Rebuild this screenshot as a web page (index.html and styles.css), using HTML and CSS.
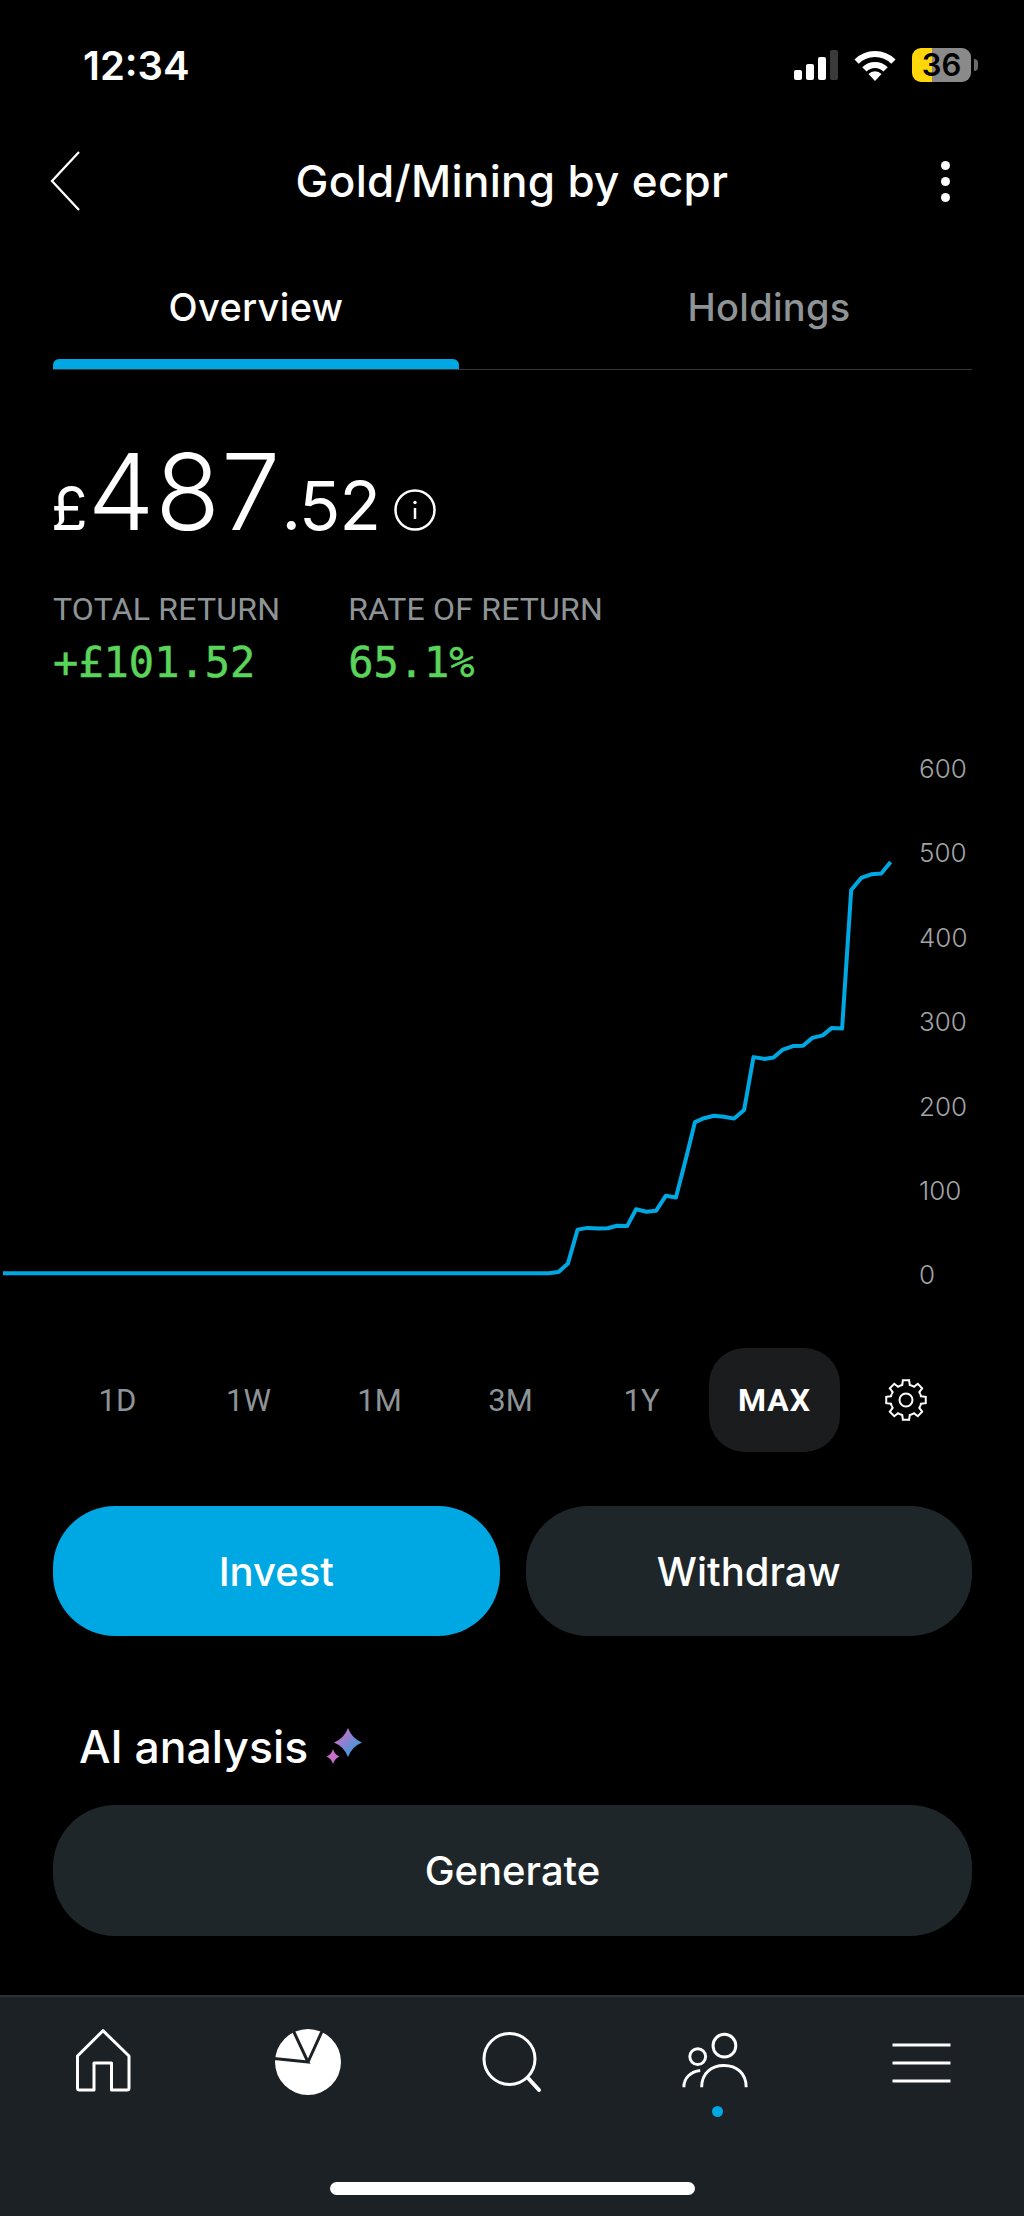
FILE: index.html
```html
<!DOCTYPE html>
<html>
<head>
    <meta charset="utf-8">
    <meta name="viewport" content="width=device-width, initial-scale=1">
    <title>Gold/Mining by ecpr</title>
    <link rel="stylesheet" href="styles.css">
</head>
<body>
    <div class="status">
        <div class="time">12:34</div>
        <div class="status-icons">
            <div class="signal">
                <span class="bar bar-1"></span>
                <span class="bar bar-2"></span>
                <span class="bar bar-3"></span>
                <span class="bar bar-4"></span>
            </div>
            <svg class="wifi" width="44" height="34" viewBox="0 0 44 34">
                <path d="M3.6 13.6a26 26 0 0 1 36.8 0" fill="none" stroke="#fff" stroke-width="6"/>
                <path d="M11.4 21.4a15 15 0 0 1 21.2 0" fill="none" stroke="#fff" stroke-width="6"/>
                <path d="M22 33l-6.500-7a9 9 0 0 1 13 0z" fill="#fff"/>
            </svg>
            <div class="battery">36</div>
            <div class="battery-cap"></div>
        </div>
    </div>

    <div class="topbar">
        <svg class="back" width="40" height="64" viewBox="0 0 40 64">
            <path d="M33 3L6 32l27 29" fill="none" stroke="#fff" stroke-width="2.300"/>
        </svg>
        <div class="title">Gold/Mining by ecpr</div>
        <div class="more">
            <span class="more-dot"></span>
            <span class="more-dot"></span>
            <span class="more-dot"></span>
        </div>
    </div>

    <div class="tabs">
        <div class="tab tab-active">Overview</div>
        <div class="tab">Holdings</div>
    </div>

    <div class="summary">
        <div class="amount">
            <span class="currency">£</span><span class="whole">487</span><span class="cents">.52</span>
            <svg class="info" width="42" height="42" viewBox="0 0 42 42">
                <circle cx="21" cy="21" r="19.500" fill="none" stroke="#fff" stroke-width="2.500"/>
                <circle cx="21" cy="13.500" r="1.700" fill="#fff"/>
                <path d="M21 19v11" stroke="#fff" stroke-width="2.500"/>
            </svg>
        </div>
        <div class="stats">
            <div class="stat">
                <div class="stat-label">TOTAL RETURN</div>
                <div class="stat-value">+£101.52</div>
            </div>
            <div class="stat">
                <div class="stat-label">RATE OF RETURN</div>
                <div class="stat-value">65.1%</div>
            </div>
        </div>
    </div>

    <div class="chart">
        <svg class="chart-line" width="910" height="608" viewBox="0 740 910 608">
            <polyline fill="none" stroke="#00a8e3" stroke-width="4" stroke-linejoin="round" points="3,1273.200 548.500,1273.200 558.500,1272.100 567.900,1263.600 577.600,1229.600 587.600,1227.900 598.700,1228.600 607.700,1228.200 617.100,1225.700 627.100,1226.100 636.100,1209.300 646.500,1211.800 656.200,1210.700 665.900,1195.700 675.900,1197.500 685.600,1160 695,1122.100 704,1118.200 714,1115.700 724,1116.800 734.100,1118.600 744.100,1110 753.500,1057.100 764.200,1058.900 773.600,1057.500 782.900,1049.600 793,1046.100 803,1045.700 812.400,1037.900 822.700,1035.400 831.800,1027.900 842.100,1028.600 851.200,890 861.200,877.900 871.200,874.300 881.300,873.600 890.600,862.100"/>
        </svg>
        <div class="axis">
            <div>600</div>
            <div>500</div>
            <div>400</div>
            <div>300</div>
            <div>200</div>
            <div>100</div>
            <div>0</div>
        </div>
    </div>

    <div class="ranges">
        <div class="range">1D</div>
        <div class="range">1W</div>
        <div class="range">1M</div>
        <div class="range">3M</div>
        <div class="range">1Y</div>
        <div class="range range-active">MAX</div>
        <div class="range">
            <svg width="44" height="44" viewBox="-22 -22 44 44" fill="none" stroke="#fff" stroke-width="2">
                <defs>
                    <path id="tooth" d="M-5.930-14.320L-3.750-15.040-3.130-19.750H3.130L3.750-15.040 5.930-14.320"/>
                </defs>
                <use href="#tooth"/>
                <use href="#tooth" transform="rotate(45)"/>
                <use href="#tooth" transform="rotate(90)"/>
                <use href="#tooth" transform="rotate(135)"/>
                <use href="#tooth" transform="rotate(180)"/>
                <use href="#tooth" transform="rotate(225)"/>
                <use href="#tooth" transform="rotate(270)"/>
                <use href="#tooth" transform="rotate(315)"/>
                <circle r="6.500"/>
            </svg>
        </div>
    </div>

    <div class="actions">
        <div class="btn btn-primary">Invest</div>
        <div class="btn">Withdraw</div>
    </div>

    <div class="analysis">
        <div class="analysis-title">
            AI analysis
            <svg class="sparkle" width="40" height="44" viewBox="0 0 40 44">
                <defs>
                    <linearGradient id="spark" x1="0" y1="0" x2="1" y2="1">
                        <stop offset="0.150" stop-color="#d06cc4"/>
                        <stop offset="0.850" stop-color="#2f9fe0"/>
                    </linearGradient>
                </defs>
                <path d="M25 3q4 10.500 14 14.500q-10 4-14 14.500q-4-10.500-14-14.500q10-4 14-14.500z" fill="url(#spark)"/>
                <path d="M10 24q1.500 5.500 6.500 7.500q-5 2-6.500 7.500q-1.500-5.500-6.500-7.500q5-2 6.500-7.500z" fill="#c870c8"/>
            </svg>
        </div>
        <div class="btn btn-wide">Generate</div>
    </div>

    <div class="bottom">
        <div class="bottom-items">
            <div class="bottom-item">
                <svg width="80" height="80" viewBox="0 0 80 80" fill="none" stroke="#fff" stroke-width="3" stroke-linejoin="round">
                    <path d="M40 10.700L14.500 36V68q0 2 2 2H31V43h17.500V70H64q2 0 2-2V36z"/>
                </svg>
            </div>
            <div class="bottom-item">
                <svg width="80" height="80" viewBox="0 0 80 80">
                    <circle cx="40" cy="42" r="33" fill="#fff"/>
                    <path d="M6 38.500L40 42 25 10M40 42L55 9" fill="none" stroke="#1c2125" stroke-width="3"/>
                </svg>
            </div>
            <div class="bottom-item">
                <svg width="80" height="80" viewBox="0 0 80 80" fill="none" stroke="#fff" stroke-width="3">
                    <circle cx="37.500" cy="39" r="25.500"/>
                    <path d="M56 58l11 12" stroke-width="4" stroke-linecap="round"/>
                </svg>
            </div>
            <div class="bottom-item">
                <svg width="80" height="80" viewBox="0 0 80 80" fill="none" stroke="#fff" stroke-width="3">
                    <circle cx="47.500" cy="26" r="11.500"/>
                    <circle cx="20.500" cy="37" r="8"/>
                    <path d="M24.500 68C24.500 53 35 46 47 46c13 0 22.500 8 22.500 22"/>
                    <path d="M6.500 68C6.500 58 14 52 23 51"/>
                </svg>
                <span class="bottom-dot"></span>
            </div>
            <div class="bottom-item">
                <svg width="80" height="80" viewBox="0 0 80 80" stroke="#fff" stroke-width="3">
                    <path d="M10.500 25h58M10.500 43h58M10.500 61h58"/>
                </svg>
            </div>
        </div>
        <div class="home-bar"></div>
    </div>
</body>
</html>
```

FILE: styles.css
```css
* {
    box-sizing: border-box;
}

body {
    margin: 0;
    width: 1024px;
    height: 2216px;
    overflow: hidden;
    background-color: #000;
    color: #fff;
    font-family: Inter, "Noto Sans", sans-serif;
    display: flex;
    flex-direction: column;
}

/* status bar */
.status {
    height: 130px;
    flex-shrink: 0;
    display: flex;
    justify-content: space-between;
    align-items: center;
    padding: 0 46px 0 83px;
}

.time {
    font-size: 40px;
    font-weight: 600;
}

.status-icons {
    display: flex;
    align-items: center;
}

.signal {
    display: flex;
    align-items: flex-end;
    gap: 4px;
    height: 30px;
    margin-right: 15px;
}

.bar {
    width: 8px;
    background-color: #fff;
    border-radius: 2px;
}

.bar-1 { height: 10px; }
.bar-2 { height: 16px; }
.bar-3 { height: 23px; }
.bar-4 { height: 30px; background-color: #3a3a3a; }

.wifi {
    margin-right: 15px;
}

.battery {
    width: 59px;
    height: 34px;
    border-radius: 9px;
    background: linear-gradient(to right, #ffd60a 0, #ffd60a 20px, #8a8a8a 20px);
    color: #000;
    font-size: 31px;
    font-weight: 600;
    line-height: 34px;
    text-align: center;
}

.battery-cap {
    width: 4px;
    height: 12px;
    margin-left: 3px;
    background-color: #6a6a6a;
    border-radius: 0 4px 4px 0;
}

/* title row */
.topbar {
    height: 102px;
    flex-shrink: 0;
    display: grid;
    grid-template-columns: 100px 1fr 100px;
    align-items: center;
}

.back {
    margin-left: 46px;
}

.title {
    font-size: 44px;
    font-weight: 500;
    letter-spacing: 0.3px;
    text-align: center;
}

.more {
    display: flex;
    flex-direction: column;
    align-items: center;
    gap: 7px;
    width: 10px;
    margin-left: 16px;
}

.more-dot {
    width: 9px;
    height: 9px;
    border-radius: 50%;
    background-color: #fff;
}

/* tabs */
.tabs {
    height: 138px;
    flex-shrink: 0;
    margin: 0 52px 0 53px;
    display: flex;
    justify-content: space-between;
    align-items: flex-end;
    border-bottom: 1px solid #33393c;
}

.tab {
    width: 406px;
    height: 84px;
    display: flex;
    flex-direction: column;
    align-items: center;
    font-size: 38px;
    font-weight: 500;
    letter-spacing: 0.3px;
    line-height: 44px;
    color: #8e9496;
}

.tab-active {
    color: #fff;
}

.tab-active::after {
    content: "";
    width: 100%;
    height: 10px;
    margin-top: auto;
    background-color: #00a8e3;
    border-radius: 6px 6px 0 0;
}

/* amount + returns */
.summary {
    height: 370px;
    flex-shrink: 0;
    padding: 64px 0 0 53px;
}

.amount {
    display: flex;
    align-items: baseline;
    line-height: 116px;
    font-weight: 300;
}

.currency {
    font-size: 60px;
    font-weight: 400;
    margin-left: -2px;
}

.whole {
    font-size: 106px;
    letter-spacing: 1px;
}

.cents {
    font-size: 68px;
    font-weight: 400;
    letter-spacing: -1px;
}

.info {
    margin-left: 14px;
    align-self: flex-end;
    margin-bottom: 35px;
}

.stats {
    display: flex;
    gap: 68px;
    margin-top: 25px;
}

.stat-label {
    font-family: Roboto, sans-serif;
    font-size: 32px;
    letter-spacing: 0.2px;
    line-height: 36px;
    color: #8e9496;
}

.stat-value {
    font-family: "DejaVu Sans Mono", monospace;
    font-size: 42px;
    line-height: 72px;
    -webkit-text-stroke: 0.5px #5ad45a;
    color: #5ad45a;
}

/* chart */
.chart {
    height: 608px;
    flex-shrink: 0;
    display: flex;
}

.chart-line {
    flex-shrink: 0;
}

.axis {
    display: flex;
    flex-direction: column;
    gap: 54.4px;
    padding: 14px 0 0 9px;
    font-size: 26px;
    font-weight: 300;
    line-height: 30px;
    color: #a0a4a6;
}

/* range picker */
.ranges {
    flex-shrink: 0;
    display: flex;
    padding-left: 52px;
}

.range {
    width: 131px;
    height: 104px;
    border-radius: 36px;
    display: flex;
    align-items: center;
    justify-content: center;
    font-family: Roboto, sans-serif;
    font-size: 31px;
    color: #8e9496;
}

.range-active {
    margin-left: 2px;
    background-color: #1a1c1e;
    color: #fff;
    font-size: 32px;
    font-weight: 700;
    letter-spacing: 1px;
}

/* buttons */
.actions {
    flex-shrink: 0;
    display: flex;
    gap: 26px;
    margin: 54px 52px 0 53px;
}

.btn {
    flex: 1;
    height: 130px;
    border-radius: 62px;
    background-color: #1e2629;
    display: flex;
    align-items: center;
    justify-content: center;
    font-size: 40px;
    font-weight: 500;
}

.btn-primary {
    background-color: #00a8e3;
}

.analysis {
    flex-shrink: 0;
    margin: 85px 52px 0 53px;
}

.analysis-title {
    display: flex;
    align-items: center;
    gap: 15px;
    height: 52px;
    margin: 0 0 32px 26px;
    font-size: 44.5px;
    font-weight: 500;
}

.sparkle {
    flex-shrink: 0;
}

.btn-wide {
    flex: none;
    height: 131px;
}

/* bottom bar */
.bottom {
    margin-top: auto;
    height: 221px;
    flex-shrink: 0;
    background-color: #1c2125;
    border-top: 2px solid #2b3336;
    padding-top: 23px;
}

.bottom-items {
    display: flex;
    height: 97px;
    padding-left: 1px;
}

.bottom-item {
    width: 205px;
    display: flex;
    flex-direction: column;
    align-items: center;
}

.bottom-dot {
    width: 11px;
    height: 11px;
    margin-top: 7px;
    border-radius: 50%;
    background-color: #00a8e3;
}

.home-bar {
    width: 365px;
    height: 13px;
    margin: 65px auto 0;
    border-radius: 7px;
    background-color: #fff;
}
```
